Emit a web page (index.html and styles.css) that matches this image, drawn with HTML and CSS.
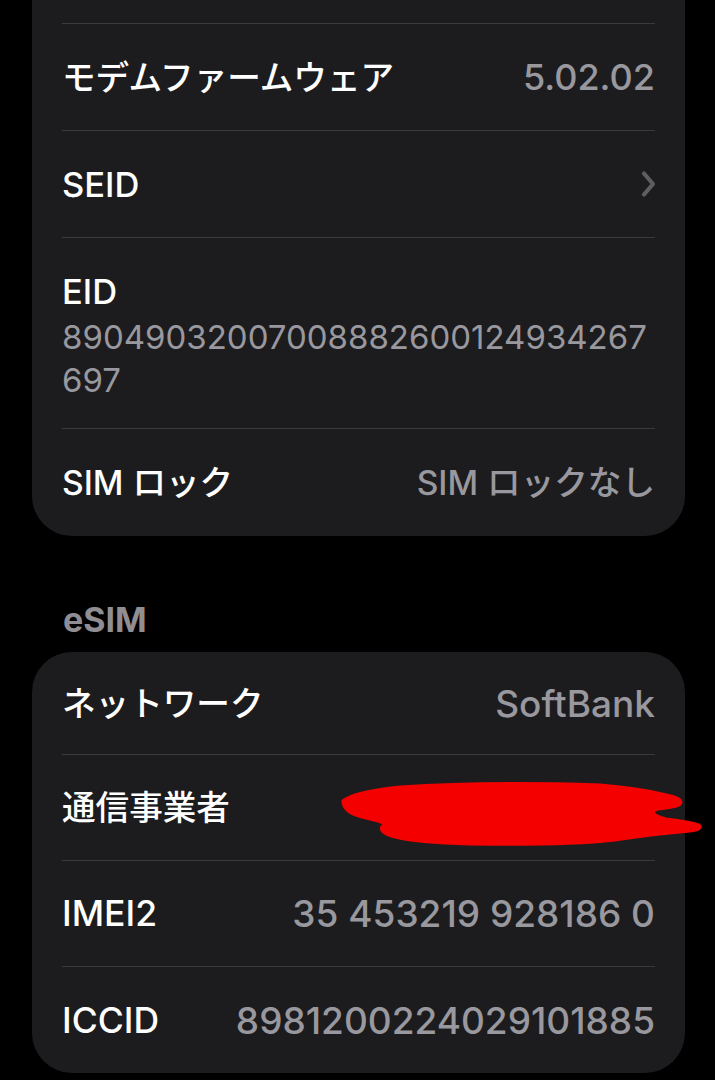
FILE: index.html
```html
<!DOCTYPE html>
<html lang="ja">
<head>
    <meta charset="utf-8">
    <title>情報</title>
    <link rel="stylesheet" href="styles.css">
</head>
<body>
    <div class="page">
        <div class="group group-top">
            <!-- row above, scrolled out of view -->
            <div class="row"></div>
            <div class="row">
                <span class="label">モデムファームウェア</span>
                <span class="value latin-lg">5.02.02</span>
            </div>
            <div class="row">
                <span class="label latin">SEID</span>
                <svg class="chevron" width="18" height="28" viewBox="0 0 18 28">
                    <path d="M5 3.5 L14 14 L5 24.5" fill="none" stroke="#5e5e62" stroke-width="4.2" stroke-linecap="round" stroke-linejoin="round"/>
                </svg>
            </div>
            <div class="row row-stack">
                <span class="label latin">EID</span>
                <span class="value value-long">89049032007008882600124934267697</span>
            </div>
            <div class="row">
                <span class="label">SIM ロック</span>
                <span class="value">SIM ロックなし</span>
            </div>
        </div>

        <div class="section-title">eSIM</div>

        <div class="group group-esim">
            <div class="row">
                <span class="label">ネットワーク</span>
                <span class="value">SoftBank</span>
            </div>
            <div class="row row-hidden">
                <span class="label">通信事業者</span>
                <!-- redacted value -->
                <svg class="scribble" width="365" height="66" viewBox="0 0 365 66">
                    <path d="M3 20 C10 14 30 9 60 6 C120 2 200 2 260 4 C285 6 305 9 322 13 C332 15 340 17 341 21 C341 25 334 26 318 28 C310 30 312 34 326 38 C340 40 356 41 360 45 C361 49 354 50 340 51 C318 53 295 56 275 59 C240 63 190 64 130 63 C95 62 70 60 55 56 C40 52 38 46 46 43 C40 40 30 38 22 36 C10 33 3 28 3 20 Z" fill="#f40000" stroke="#f40000" stroke-width="3" stroke-linejoin="round"/>
                </svg>
            </div>
            <div class="row">
                <span class="label latin">IMEI2</span>
                <span class="value">35 453219 928186 0</span>
            </div>
            <div class="row">
                <span class="label latin">ICCID</span>
                <span class="value">8981200224029101885</span>
            </div>
        </div>
    </div>
</body>
</html>
```

FILE: styles.css
```css
body {
    margin: 0;
    background: #000;
    font-family: "Inter", "Noto Sans CJK JP", sans-serif;
    color: #fff;
    overflow: hidden;
}
.page {
    width: 715px;
    height: 1080px;
    overflow: hidden;
}
.group {
    background: #1c1c1e;
    margin: 0 30px 0 32px;
    border-radius: 40px;
}
.group-top {
    margin-top: -83px;
}
.row {
    box-sizing: border-box;
    height: 107px;
    margin: 0 30px;
    display: flex;
    align-items: center;
    justify-content: space-between;
    border-bottom: 1px solid #3a3a3c;
    font-size: 33.6px;
    line-height: 43px;
    font-weight: 500;
}
.row:last-child {
    border-bottom: none;
}
.row-stack {
    height: auto;
    flex-direction: column;
    align-items: flex-start;
    padding: 32px 0 26px;
}
.row-hidden {
    position: relative;
}
.label {
    color: #fff;
}
.value {
    color: #98989e;
}
.latin {
    font-size: 34.5px;
}
.latin-lg {
    font-size: 36px;
}
.value-long {
    margin-top: 3px;
    font-size: 33px;
    font-weight: 400;
    word-break: break-all;
}
.group-esim .row {
    height: 106px;
}
.group-esim .row:first-child {
    height: 103px;
}
.group-esim .latin {
    font-size: 35.5px;
}
.group-esim .value {
    font-size: 37px;
}
.chevron {
    margin-right: -2px;
}
.scribble {
    position: absolute;
    left: 278px;
    top: 26px;
    overflow: visible;
}
.section-title {
    margin: 64px 0 12px 63px;
    font-size: 34px;
    line-height: 40px;
    font-weight: 700;
    color: #8e8e93;
}
```
